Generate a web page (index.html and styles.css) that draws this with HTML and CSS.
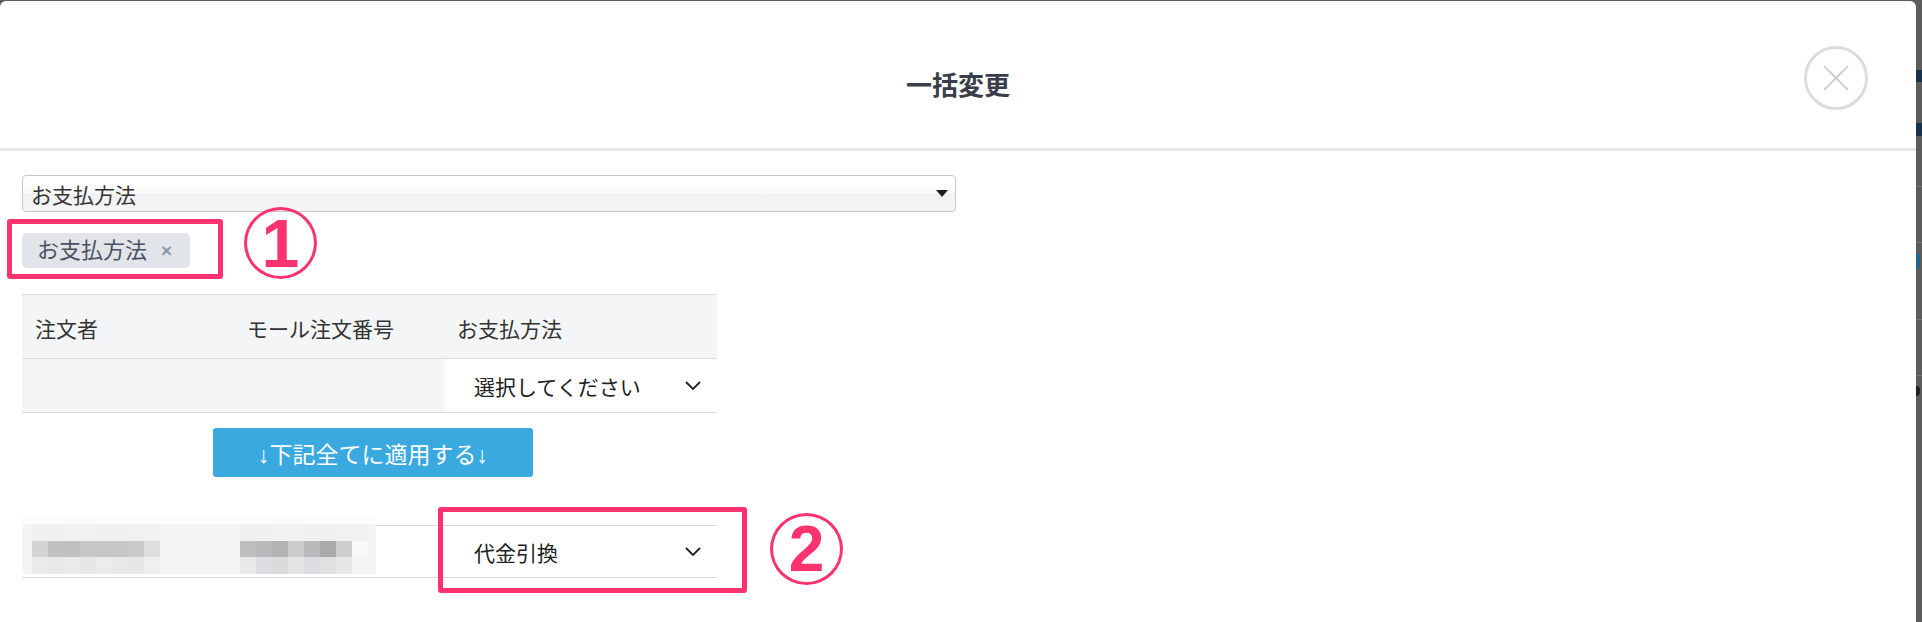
FILE: index.html
```html
<!DOCTYPE html>
<html lang="ja">
<head>
    <meta charset="UTF-8">
    <meta name="viewport" content="width=device-width, initial-scale=1.0">
    <title>一括変更</title>
    <link rel="stylesheet" href="styles.css">
</head>
<body>

    <div class="modal">
        <div class="modal-head">
            <h1>一括変更</h1>
            <button class="close-btn" type="button" aria-label="閉じる">
                <svg width="64" height="64" viewBox="0 0 64 64">
                    <circle cx="32" cy="32" r="30.5" fill="none" stroke="#dcdcdc" stroke-width="3"/>
                    <path d="M20 20L44 44M44 20L20 44" stroke="#d0d0d0" stroke-width="2"/>
                </svg>
            </button>
        </div>

        <div class="modal-body">
            <div class="picker">
                <span>お支払方法</span>
                <span class="picker-caret"></span>
            </div>

            <div class="tags">
                <span class="tag">お支払方法<span class="tag-x">×</span></span>
                <span class="mark mark-tag"></span>
                <span class="num num-1">1</span>
            </div>

            <div class="bulk">
                <div class="bulk-row bulk-head">
                    <div class="cell">注文者</div>
                    <div class="cell">モール注文番号</div>
                    <div class="cell">お支払方法</div>
                </div>
                <div class="bulk-row bulk-all">
                    <div class="cell"></div>
                    <div class="cell"></div>
                    <div class="cell cell-select">
                        <div class="select">
                            <span>選択してください</span>
                            <svg width="16" height="9" viewBox="0 0 16 9"><polyline points="1,1 8,8 15,1" fill="none" stroke="#222" stroke-width="1.8"/></svg>
                        </div>
                    </div>
                </div>
            </div>

            <div class="apply">
                <button class="apply-btn" type="button">↓下記全てに適用する↓</button>
            </div>

            <div class="bulk order">
                <div class="bulk-row order-row">
                    <div class="cell cell-blur">
                        <!-- pixelated customer / order number -->
                        <div class="mosaic">
                            <div class="blur blur-name"><i class="b-top"></i><i class="b-mid"></i><i class="b-low"></i></div>
                            <div class="blur blur-no"><i class="b-top"></i><i class="b-mid"></i><i class="b-low"></i></div>
                        </div>
                    </div>
                    <div class="cell cell-select">
                        <div class="select">
                            <span>代金引換</span>
                            <svg width="16" height="9" viewBox="0 0 16 9"><polyline points="1,1 8,8 15,1" fill="none" stroke="#222" stroke-width="1.8"/></svg>
                        </div>
                    </div>
                </div>
                <span class="mark mark-order"></span>
                <span class="num num-2">2</span>
            </div>
        </div>
    </div>

    <div class="page-edge">
        <i class="edge-band"></i>
        <i class="edge-band second"></i>
        <i class="edge-line"></i>
        <i class="edge-line tall"></i>
        <i class="edge-text"></i>
        <i class="edge-line"></i>
        <i class="edge-line"></i>
        <i class="edge-dot"></i>
    </div>

</body>
</html>
```

FILE: styles.css
```css
* {
    box-sizing: border-box;
}
html, body {
    height: 100%;
}
body {
    margin: 0;
    display: flex;
    background: #5c5c5c;
    font-family: "Liberation Sans", "Noto Sans CJK JP", sans-serif;
    color: #333;
    overflow: hidden;
}

/* modal */
.modal {
    flex: none;
    width: 1916px;
    margin-top: 1px;
    background: #fff;
    border-radius: 6px 6px 0 0;
}
.modal-head {
    position: relative;
    height: 150px;
    padding-top: 60px;
    display: flex;
    justify-content: center;
    border-bottom: 3px solid #e6e6e6;
}
.modal-head h1 {
    margin: 0;
    font-size: 26px;
    line-height: 50px;
    font-weight: bold;
    color: #393e4a;
}
.close-btn {
    position: absolute;
    right: 48px;
    top: 45px;
    width: 64px;
    height: 64px;
    padding: 0;
    border: none;
    background: none;
}
.close-btn svg {
    display: block;
}
.modal-body {
    padding: 24px 22px 0;
}

/* column picker */
.picker {
    width: 934px;
    height: 37px;
    padding: 0 7px 0 8px;
    display: flex;
    align-items: center;
    justify-content: space-between;
    border: 1px solid #c8c8c8;
    border-radius: 4px;
    background: linear-gradient(#fff 20%, #f8f8f8 50%, #f1f1f1 52%, #f5f5f5 100%);
    font-size: 21px;
    color: #333;
}
.picker-caret {
    border-top: 7px solid #1e1e1e;
    border-left: 6px solid transparent;
    border-right: 6px solid transparent;
}

/* selected tags */
.tags {
    position: relative;
    margin-top: 21px;
    height: 35px;
    display: flex;
}
.tag {
    display: inline-flex;
    align-items: center;
    height: 35px;
    padding: 0 18px 0 15px;
    background: #e1e4e9;
    border-radius: 5px;
    font-size: 22px;
    line-height: 1;
    color: #4a5162;
}
.tag-x {
    margin-left: 14px;
    font-size: 19px;
    font-weight: bold;
    color: #8c97a7;
}

/* annotations */
.mark {
    position: absolute;
    border: 5px solid #fd3370;
    border-radius: 3px;
}
.mark-tag {
    left: -15px;
    top: -14px;
    width: 216px;
    height: 60px;
}
.num {
    position: absolute;
    width: 73px;
    height: 72px;
    display: flex;
    align-items: center;
    justify-content: center;
    border: 3.5px solid #fd3370;
    border-radius: 50%;
    color: #fd3370;
    font-family: "Liberation Sans", sans-serif;
    font-size: 68px;
    font-weight: bold;
    line-height: 1;
}
.num-1 {
    left: 222px;
    top: -26px;
}
.mark-order {
    left: 416px;
    top: -18px;
    width: 309px;
    height: 86px;
}
.num-2 {
    left: 748px;
    top: -12px;
    font-size: 64px;
}

/* bulk table */
.bulk {
    position: relative;
    width: 695px;
    margin-top: 26px;
}
.bulk-row {
    display: grid;
    grid-template-columns: 212px 210px 273px;
    border-bottom: 1px solid #dcdcdc;
}
.bulk-head {
    height: 65px;
    border-top: 1px solid #dcdcdc;
}
.bulk-head .cell {
    display: flex;
    align-items: center;
    padding: 3px 0 0 13px;
    background: #f4f5f7;
    font-size: 21px;
    color: #333;
}
.bulk-all {
    height: 54px;
}
.bulk-all .cell {
    background: #f4f5f7;
}
.bulk-all .cell-select,
.order-row .cell-select {
    background: #fff;
}
.select {
    height: 100%;
    padding: 0 16px 0 30px;
    display: flex;
    align-items: center;
    justify-content: space-between;
    font-size: 21px;
    color: #222;
}
.select svg {
    display: block;
}

.apply {
    width: 695px;
    margin-top: 15px;
    display: flex;
    justify-content: center;
    padding-left: 7px;
}
.apply-btn {
    width: 320px;
    height: 49px;
    border: none;
    border-radius: 3px;
    background: #39a9e0;
    color: #fff;
    font-family: inherit;
    font-size: 23px;
}

/* order row */
.order {
    margin-top: 48px;
}
.order-row {
    height: 53px;
    grid-template-columns: 422px 273px;
    border-top: 1px solid #dcdcdc;
}
.mosaic {
    position: relative;
    width: 354px;
    height: 56px;
    margin-top: -8px;
    padding: 6px 0 0 10px;
    display: flex;
    gap: 80px;
    background: linear-gradient(#fafbfc 0 6px, #f4f5f7 6px);
}
.blur {
    width: 128px;
    display: flex;
    flex-direction: column;
}
.blur i {
    display: block;
}
.b-top {
    height: 17px;
    background: linear-gradient(90deg, #eef0f2 0 32px, #f1f2f4 32px 64px, #eef0f2 64px 96px, #f0f1f3 96px 128px);
}
.b-mid {
    height: 16px;
}
.b-low {
    height: 17px;
}
.blur-name .b-mid {
    background: linear-gradient(90deg, #d2d3d5 0 16px, #c0c1c3 16px 48px, #c7c8ca 48px 64px, #c5c6c8 64px 96px, #c9cacc 96px 112px, #dddee0 112px 128px);
}
.blur-name .b-low {
    background: linear-gradient(90deg, #e9eaec 0 16px, #e7e8ea 16px 32px, #eaebed 32px 48px, #e6e7e9 48px 64px, #ebecee 64px 80px, #e7e8ea 80px 96px, #e6e7e9 96px 112px, #eeeff1 112px 128px);
}
.blur-no .b-mid {
    background: linear-gradient(90deg, #bdbec0 0 16px, #b8b9bb 16px 32px, #b2b3b5 32px 48px, #cacbcd 48px 64px, #b9babc 64px 80px, #a9aaac 80px 96px, #cdced0 96px 112px, #f8f9fb 112px 128px);
}
.blur-no .b-low {
    background: linear-gradient(90deg, #e8e9eb 0 16px, #dcdde0 16px 32px, #dadbdd 32px 48px, #e3e4e6 48px 64px, #dcdde0 64px 80px, #dfe0e2 80px 96px, #e6e7e9 96px 112px, #f4f5f7 112px 128px);
}

/* page behind the overlay */
.page-edge {
    flex: 1;
    display: flex;
    flex-direction: column;
}
.page-edge i {
    display: block;
}
.edge-band {
    height: 12px;
    margin-top: 70px;
    background: #17324a;
}
.edge-band.second {
    height: 13px;
    margin-top: 41px;
}
.edge-line {
    height: 1px;
    margin-top: 50px;
    background: #767676;
}
.edge-line.tall {
    margin-top: 163px;
}
.edge-text {
    width: 4px;
    height: 15px;
    margin-top: 11px;
    background: #25658c;
}
.edge-line + .edge-line {
    margin-top: 55px;
}
.edge-dot {
    width: 4px;
    height: 10px;
    margin-top: 10px;
    border-radius: 0 5px 5px 0;
    background: #202020;
}
```
